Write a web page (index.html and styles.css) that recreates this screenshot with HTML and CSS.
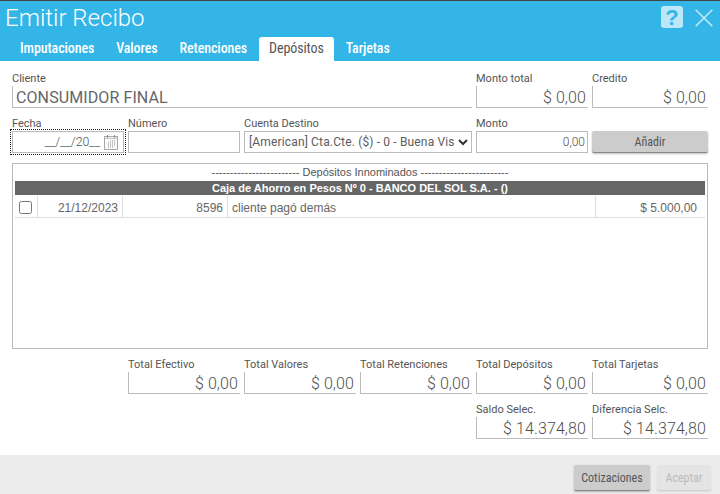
FILE: index.html
```html
<!DOCTYPE html>
<html lang="es">
<head>
<meta charset="utf-8">
<title>Emitir Recibo</title>
<link rel="stylesheet" href="styles.css">
</head>
<body>
<div class="dialog">
  <header class="head">
    <div class="title-row">
      <h1 class="title">Emitir Recibo</h1>
      <div class="head-icons">
        <span class="help">?</span>
        <svg class="close" width="18" height="18" viewBox="0 0 18 18"><path d="M0.7 0.7 17.3 17.3M17.3 0.7 0.7 17.3" fill="none" stroke="#c4ecfb" stroke-width="1.5"/></svg>
      </div>
    </div>
    <nav class="tabs">
      <a class="tab">Imputaciones</a>
      <a class="tab">Valores</a>
      <a class="tab">Retenciones</a>
      <a class="tab active">Depósitos</a>
      <a class="tab">Tarjetas</a>
    </nav>
  </header>
  <main class="body">
    <div class="row row-top">
      <div class="field f-client"><label class="lbl">Cliente</label><div class="val val-left">CONSUMIDOR FINAL</div></div>
      <div class="field"><label class="lbl">Monto total</label><div class="val">$ 0,00</div></div>
      <div class="field f-last"><label class="lbl">Credito</label><div class="val">$ 0,00</div></div>
    </div>
    <div class="row row-entry">
      <div class="field"><label class="lbl">Fecha</label>
        <div class="box date-box"><span class="date-text">__/__/20__</span>
          <svg class="cal" width="14" height="15" viewBox="0 0 14 15"><rect x="0.5" y="1.5" width="13" height="13" fill="#fafafa" stroke="#a8a8a8"/><path d="M3.5 0v3M10.5 0v3" stroke="#8a8a8a"/><path d="M1 3.5h12" stroke="#c8c8c8"/><path d="M6 6h1M8 6h1M10 6h1M4 8h1M6 8h1M8 8h1M10 8h1M4 10h1M6 10h1M8 10h1M10 10h1M4 12h1M6 12h1M8 12h1" stroke="#8e8e8e"/></svg>
        </div>
      </div>
      <div class="field"><label class="lbl">Número</label><div class="box"></div></div>
      <div class="field f-account"><label class="lbl">Cuenta Destino</label>
        <div class="box select-box"><span class="select-text">[American] Cta.Cte. ($) - 0 - Buena Vis</span>
          <svg class="chev" width="10" height="7" viewBox="0 0 10 7"><path d="M1 1 5 5 9 1" fill="none" stroke="#333" stroke-width="2"/></svg>
        </div>
      </div>
      <div class="field"><label class="lbl">Monto</label><div class="box amount">0,00</div></div>
      <div class="field f-last"><button class="btn btn-add">Añadir</button></div>
    </div>
    <section class="grid-panel">
      <div class="g-title">------------------------ Depósitos Innominados ------------------------</div>
      <div class="g-band">Caja de Ahorro en Pesos Nº 0 - BANCO DEL SOL S.A. - ()</div>
      <div class="g-row">
        <div class="c c-check"><span class="check"></span></div>
        <div class="c c-date">21/12/2023</div>
        <div class="c c-num">8596</div>
        <div class="c c-desc">cliente pagó demás</div>
        <div class="c c-amt">$ 5.000,00</div>
      </div>
    </section>
    <div class="row row-totals">
      <div class="field"><label class="lbl">Total Efectivo</label><div class="val">$ 0,00</div></div>
      <div class="field"><label class="lbl">Total Valores</label><div class="val">$ 0,00</div></div>
      <div class="field"><label class="lbl">Total Retenciones</label><div class="val">$ 0,00</div></div>
      <div class="field"><label class="lbl">Total Depósitos</label><div class="val">$ 0,00</div></div>
      <div class="field f-last"><label class="lbl">Total Tarjetas</label><div class="val">$ 0,00</div></div>
    </div>
    <div class="row row-saldo">
      <div class="field"><label class="lbl">Saldo Selec.</label><div class="val">$ 14.374,80</div></div>
      <div class="field f-last"><label class="lbl">Diferencia Selc.</label><div class="val">$ 14.374,80</div></div>
    </div>
  </main>
  <footer class="foot">
    <button class="btn btn-foot">Cotizaciones</button>
    <button class="btn btn-foot btn-disabled">Aceptar</button>
  </footer>
</div>
</body>
</html>
```
FILE: styles.css
```css
* { box-sizing: border-box; }
html, body { margin: 0; padding: 0; }
body { width: 720px; height: 494px; overflow: hidden; background: #fff; font-family: Roboto, sans-serif; color: #555; }
.dialog { display: flex; flex-direction: column; height: 494px; }
.head { background: #33b5e8; border-top: 1px solid #444; height: 61px; display: flex; flex-direction: column; }
.title-row { display: flex; justify-content: space-between; height: 35px; padding: 3px 7px 0 5px; }
.title { margin: 0; font-size: 24px; font-weight: 300; line-height: 29px; color: #fff; }
.head-icons { display: flex; align-items: flex-start; gap: 12px; padding-top: 2px; }
.help { width: 22px; height: 22px; background: #bce7f9; border-radius: 3px; color: #33b5e8; font: bold 22px/23px "Liberation Sans", sans-serif; text-align: center; }
.close { margin-top: 3px; }
.tabs { display: flex; gap: 2px; padding: 1px 0 0 10px; height: 25px; }
.tab { padding: 0 10px; height: 24px; line-height: 23px; font-size: 14px; font-weight: 500; font-stretch: 75%; letter-spacing: -0.1px; color: #fff; border-radius: 3px 3px 0 0; }
.tab.active { background: #fff; color: #555; font-weight: 400; }
.body { flex: 1; padding: 10px 12px 0; }
.row { display: flex; gap: 4px; }
.row-totals { justify-content: flex-end; margin-top: 8px; }
.row-saldo { justify-content: flex-end; margin-top: 8px; }
.row-entry { margin-top: 8px; }
.field { width: 112px; flex: none; }
.f-client { width: 460px; }
.f-account { width: 228px; }
.f-last { width: 116px; }
.lbl { display: block; font-size: 11px; line-height: 15px; color: #555; white-space: nowrap; }
.val { height: 22px; border-left: 1px solid #bbb; border-bottom: 1px solid #bbb; font-size: 16px; line-height: 23px; text-align: right; padding: 0 2px; color: #505050; font-weight: 300; white-space: nowrap; letter-spacing: 0.1px; }
.val-left { text-align: left; padding-left: 3px; font-weight: 400; color: #666; }
.box { height: 22px; border: 1px solid #bbb; font-size: 12px; line-height: 20px; color: #666; white-space: nowrap; overflow: hidden; }
.date-box { display: flex; align-items: center; justify-content: flex-end; gap: 4px; padding-right: 5px; outline: 1px dotted #123; outline-offset: 1px; overflow: visible; }
.date-text { font-size: 12.3px; font-weight: 300; color: #505050; }
.cal { flex: none; }
.select-box { display: flex; align-items: center; padding: 0 3px 0 4px; gap: 2px; }
.select-text { flex: 1; overflow: hidden; letter-spacing: 0.15px; color: #5c5c5c; }
.chev { flex: none; }
.amount { text-align: right; padding-right: 2px; font-weight: 300; color: #505050; }
.btn { display: block; font: 400 12px Roboto, sans-serif; font-stretch: 85%; color: #555; background: #ccc; border: 0; border-radius: 2px; border-bottom: 1px solid #888; box-shadow: 0 1px 2px rgba(0,0,0,.25); padding: 0; }
.btn-add { width: 116px; height: 22px; margin-top: 15px; }
.grid-panel { height: 186px; margin-top: 10px; border: 1px solid #bbb; padding: 0 2px; }
.g-title { text-align: center; font: 11px/17px "Liberation Sans", sans-serif; color: #555; height: 17px; white-space: nowrap; }
.g-band { background: #666; color: #fff; text-align: center; font: bold 11px/14px "Liberation Sans", sans-serif; height: 14px; }
.g-row { display: flex; height: 22px; margin-top: 1px; border-bottom: 1px solid #ddd; font: 12px/24px "Liberation Sans", sans-serif; color: #666; }
.c { padding: 0 4px; border-right: 1px solid #ddd; white-space: nowrap; }
.c-check { width: 23px; padding: 5px 0 0 4px; }
.check { display: block; width: 13px; height: 13px; border: 1px solid #767676; border-radius: 2.5px; background: #fff; }
.c-date { width: 85px; text-align: right; }
.c-num { width: 105px; text-align: right; }
.c-desc { width: 368px; }
.c-amt { flex: 1; text-align: right; border-right: 0; padding-right: 8px; }
.foot { height: 39px; background: #ececec; display: flex; justify-content: flex-end; gap: 7px; padding: 10px 9px 0 0; }
.btn-foot { width: 76px; height: 26px; }
.btn-disabled { width: 54px; background: #e4e4e4; color: #bbb; border-bottom-color: #d0d0d0; box-shadow: 0 1px 2px rgba(0,0,0,.08); }
```
